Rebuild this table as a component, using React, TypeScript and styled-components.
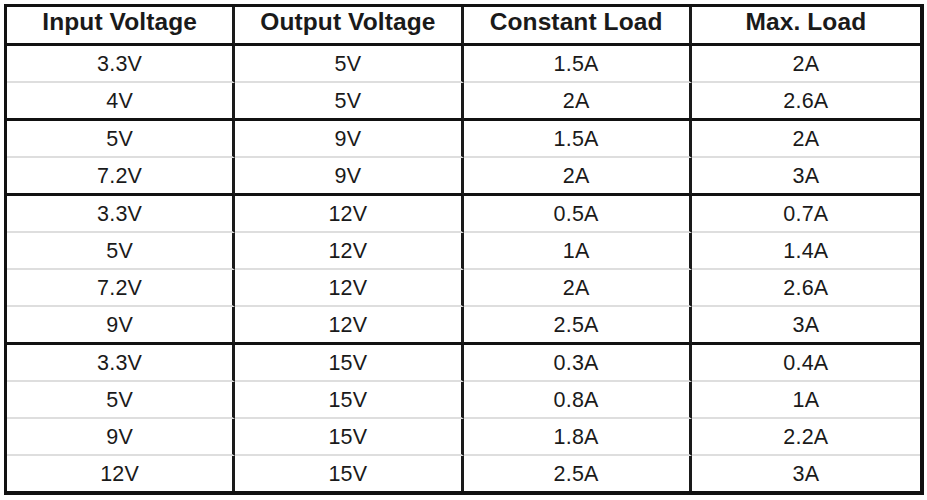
import React from "react";
import styled, { createGlobalStyle } from "styled-components";

const GlobalStyle = createGlobalStyle`
  html, body {
    margin: 0;
    padding: 0;
    background: #ffffff;
  }
  body {
    font-family: "Liberation Sans", Arial, sans-serif;
    color: #1c1c1c;
  }
`;

const Page = styled.div`
  padding: 4px 0 0 4px;
`;

const Table = styled.table`
  border-collapse: separate;
  border-spacing: 0;
  table-layout: fixed;
  width: 920px;
  border-style: solid;
  border-color: #111;
  border-width: 3px 4px 4px 3px;
  font-family: "Liberation Sans", Arial, sans-serif;
`;

const HeadCell = styled.th<{ $last?: boolean }>`
  height: 31px;
  padding: 0 0 5px 0;
  box-sizing: content-box;
  font-size: 24.5px;
  font-weight: 700;
  text-align: center;
  vertical-align: middle;
  color: #1a1a1a;
  border-bottom: 3px solid #111;
  border-right: ${(p) => (p.$last ? "none" : "3px solid #1a1a1a")};
  letter-spacing: 0.1px;
  line-height: 1;
`;

const Cell = styled.td<{ $last?: boolean; $edge: "thick" | "light" | "none" }>`
  height: 32px;
  padding: 3px 0 0 0;
  box-sizing: content-box;
  font-size: 21.5px;
  text-align: center;
  vertical-align: middle;
  color: #1a1a1a;
  line-height: 1;
  border-right: ${(p) => (p.$last ? "none" : "3px solid #1a1a1a")};
  border-bottom: ${(p) =>
    p.$edge === "thick"
      ? "3px solid #111"
      : p.$edge === "light"
      ? "2px solid #dedede"
      : "none"};
  letter-spacing: 0.2px;
`;

const Row = styled.tr``;

type Data = [string, string, string, string];

const groups: Data[][] = [
  [
    ["3.3V", "5V", "1.5A", "2A"],
    ["4V", "5V", "2A", "2.6A"],
  ],
  [
    ["5V", "9V", "1.5A", "2A"],
    ["7.2V", "9V", "2A", "3A"],
  ],
  [
    ["3.3V", "12V", "0.5A", "0.7A"],
    ["5V", "12V", "1A", "1.4A"],
    ["7.2V", "12V", "2A", "2.6A"],
    ["9V", "12V", "2.5A", "3A"],
  ],
  [
    ["3.3V", "15V", "0.3A", "0.4A"],
    ["5V", "15V", "0.8A", "1A"],
    ["9V", "15V", "1.8A", "2.2A"],
    ["12V", "15V", "2.5A", "3A"],
  ],
];

const headers = ["Input Voltage", "Output Voltage", "Constant Load", "Max. Load"];

export default function App() {
  return (
    <>
      <GlobalStyle />
      <Page>
        <Table>
          <thead>
            <Row>
              {headers.map((h, i) => (
                <HeadCell key={h} $last={i === headers.length - 1}>
                  {h}
                </HeadCell>
              ))}
            </Row>
          </thead>
          <tbody>
            {groups.map((g, gi) =>
              g.map((r, ri) => {
                const lastInGroup = ri === g.length - 1;
                const lastGroup = gi === groups.length - 1;
                const edge: "thick" | "light" | "none" = lastInGroup
                  ? lastGroup
                    ? "none"
                    : "thick"
                  : "light";
                return (
                  <Row key={`${gi}-${ri}`}>
                    {r.map((c, ci) => (
                      <Cell key={ci} $edge={edge} $last={ci === r.length - 1}>
                        {c}
                      </Cell>
                    ))}
                  </Row>
                );
              })
            )}
          </tbody>
        </Table>
      </Page>
    </>
  );
}
